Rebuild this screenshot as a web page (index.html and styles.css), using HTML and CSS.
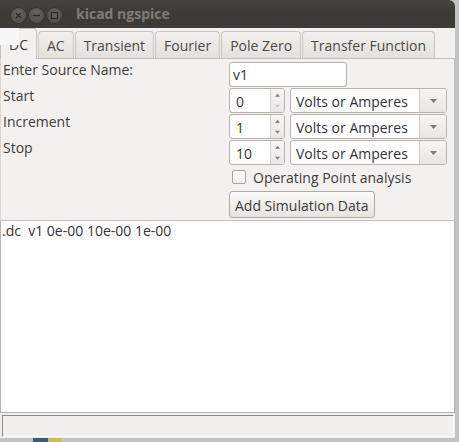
FILE: index.html
```html
<!DOCTYPE html>
<html>
<head>
<meta charset="utf-8">
<title>kicad ngspice</title>
<link rel="stylesheet" href="styles.css">
</head>
<body>
<div class="desktop">
  <div class="window">
    <div class="titlebar">
      <div class="wbtns">
        <span class="wbtn"><svg width="15" height="15" viewBox="0 0 15 15"><path d="M5 5 L10 10 M10 5 L5 10" stroke="#2b2a27" stroke-width="1.4" fill="none"/></svg></span>
        <span class="wbtn"><svg width="15" height="15" viewBox="0 0 15 15"><path d="M4 7.5 H11" stroke="#2b2a27" stroke-width="1.4" fill="none"/></svg></span>
        <span class="wbtn"><svg width="15" height="15" viewBox="0 0 15 15"><rect x="4.5" y="4.5" width="6" height="6" stroke="#2b2a27" stroke-width="1.2" fill="none"/></svg></span>
      </div>
      <span class="title">kicad ngspice</span>
    </div>

    <div class="tabs">
      <div class="tab active">DC</div>
      <div class="tab">AC</div>
      <div class="tab">Transient</div>
      <div class="tab">Fourier</div>
      <div class="tab">Pole Zero</div>
      <div class="tab">Transfer Function</div>
      <div class="glitch"></div>
    </div>

    <div class="panel">
      <div class="form">
        <div class="lbl">Enter Source Name:</div>
        <div class="cell"><div class="entry name">v1</div></div>

        <div class="lbl">Start</div>
        <div class="cell">
          <div class="spin">
            <span class="val">0</span>
            <span class="arrows">
              <svg width="13" height="12" viewBox="0 0 13 12"><path d="M4 8 L6.5 5 L9 8 Z" fill="#7a7a7a"/></svg>
              <svg width="13" height="12" viewBox="0 0 13 12"><path d="M4 4 L6.5 7 L9 4 Z" fill="#c4c4c4"/></svg>
            </span>
          </div>
          <div class="combo"><span class="ctext">Volts or Amperes</span><span class="cbtn"><svg width="9" height="6" viewBox="0 0 9 6"><path d="M1 1 L8 1 L4.5 5 Z" fill="#7b7b7b"/></svg></span></div>
        </div>

        <div class="lbl">Increment</div>
        <div class="cell">
          <div class="spin">
            <span class="val">1</span>
            <span class="arrows">
              <svg width="13" height="12" viewBox="0 0 13 12"><path d="M4 8 L6.5 5 L9 8 Z" fill="#7a7a7a"/></svg>
              <svg width="13" height="12" viewBox="0 0 13 12"><path d="M4 4 L6.5 7 L9 4 Z" fill="#7a7a7a"/></svg>
            </span>
          </div>
          <div class="combo"><span class="ctext">Volts or Amperes</span><span class="cbtn"><svg width="9" height="6" viewBox="0 0 9 6"><path d="M1 1 L8 1 L4.5 5 Z" fill="#7b7b7b"/></svg></span></div>
        </div>

        <div class="lbl">Stop</div>
        <div class="cell">
          <div class="spin">
            <span class="val">10</span>
            <span class="arrows">
              <svg width="13" height="12" viewBox="0 0 13 12"><path d="M4 8 L6.5 5 L9 8 Z" fill="#7a7a7a"/></svg>
              <svg width="13" height="12" viewBox="0 0 13 12"><path d="M4 4 L6.5 7 L9 4 Z" fill="#7a7a7a"/></svg>
            </span>
          </div>
          <div class="combo"><span class="ctext">Volts or Amperes</span><span class="cbtn"><svg width="9" height="6" viewBox="0 0 9 6"><path d="M1 1 L8 1 L4.5 5 Z" fill="#7b7b7b"/></svg></span></div>
        </div>

        <div class="spacer"></div>
        <div class="check"><span class="box"></span><span>Operating Point analysis</span></div>

        <div class="spacer"></div>
        <div class="btncell"><button class="btn">Add Simulation Data</button></div>
      </div>
    </div>

    <div class="output">.dc&nbsp; v1 0e-00 10e-00 1e-00</div>

    <div class="statusbar"><div class="status-inner"></div></div>
  </div>
  <div class="taskicon"></div>
</div>
</body>
</html>
```

FILE: styles.css
```css
* { box-sizing: border-box; }

html, body {
  margin: 0;
  padding: 0;
  background: #c3c3c3;
}

body {
  font-family: "Open Sans", "Noto Sans", sans-serif;
  font-size: 14px;
  color: #3c3c3c;
}

.desktop {
  position: relative;
  width: 459px;
  height: 442px;
  background: #c2c2c2;
  overflow: hidden;
}

.window {
  position: relative;
  width: 455px;
  height: 438px;
  background: #f2f1f0;
  border-radius: 0 6px 0 0;
  display: flex;
  flex-direction: column;
  overflow: hidden;
}

/* title bar */
.titlebar {
  height: 28px;
  flex: none;
  background: linear-gradient(#45443f, #3c3b37 40%, #3c3b37);
  display: flex;
  align-items: flex-start;
  padding-left: 11px;
}

.wbtns {
  display: flex;
  gap: 3px;
  padding-top: 8px;
}

.wbtn {
  width: 15px;
  height: 15px;
  border-radius: 50%;
  background: radial-gradient(circle at 50% 35%, #66655f, #52514c 70%);
  box-shadow: 0 0 0 0.5px #2e2d2a;
  display: block;
}

.wbtn svg { display: block; }

.title {
  margin-left: 14px;
  margin-top: 4px;
  line-height: 19px;
  font-weight: bold;
  font-size: 14px;
  color: #7f7c75;
}

/* tabs */
.tabs {
  position: relative;
  height: 30px;
  flex: none;
  display: flex;
  align-items: flex-end;
  z-index: 2;
}

.tab {
  height: 27px;
  padding: 4px 8px 0;
  line-height: 19px;
  border: 1px solid #c9c6c1;
  border-bottom: 0;
  border-radius: 4px 4px 0 0;
  background: linear-gradient(#f1f0ee, #e3e1de);
  color: #4a4a4a;
  margin-right: 1px;
  white-space: nowrap;
}

.tab.active {
  height: 31px;
  margin-bottom: -1px;
  padding-top: 6px;
  background: #f2f1f0;
  border-color: #c3c0bb;
  color: #3c3c3c;
}

.glitch {
  position: absolute;
  left: 0;
  top: 0;
  width: 19px;
  height: 17px;
  background: #f7f7f7;
}

/* panel */
.panel {
  flex: none;
  height: 163px;
  border: 1px solid #c4c1bc;
  border-left-color: #d9d7d3;
  padding: 3px 0 0 2px;
}

.form {
  display: grid;
  grid-template-columns: 226px 1fr;
  grid-template-rows: 25px 25px 25px 25px 18px 28px;
  row-gap: 1px;
}

.lbl {
  line-height: 15px;
  align-self: start;
  white-space: nowrap;
}

.cell {
  display: flex;
  align-items: stretch;
}

.entry {
  height: 25px;
  background: #fff;
  border: 1px solid #b7b4ae;
  border-radius: 3px;
  padding: 2px 0 0 3px;
  line-height: 19px;
  color: #333;
}

.entry.name { width: 118px; }

.spin {
  width: 56px;
  height: 25px;
  display: flex;
  border: 1px solid #b7b4ae;
  border-radius: 3px;
  background: #fff;
  overflow: hidden;
}

.spin .val {
  flex: 1;
  padding: 3px 0 0 6px;
  line-height: 19px;
  color: #333;
}

.spin .arrows {
  width: 14px;
  display: flex;
  flex-direction: column;
  border-left: 1px solid #d7d5d1;
  background: linear-gradient(#f7f6f5, #e9e8e6);
}

.spin .arrows svg { display: block; flex: 1; }

.combo {
  margin-left: 5px;
  width: 157px;
  height: 25px;
  display: flex;
  border: 1px solid #b7b4ae;
  border-radius: 3px;
  background: #fff;
  overflow: hidden;
}

.combo .ctext {
  flex: 1;
  padding: 3px 0 0 5px;
  line-height: 19px;
  color: #333;
  white-space: nowrap;
}

.combo .cbtn {
  width: 27px;
  border-left: 1px solid #cfccc7;
  background: linear-gradient(#f6f5f4, #e8e6e3);
  display: flex;
  align-items: center;
  justify-content: center;
}

.combo .cbtn svg { display: block; }

.check {
  margin-top: 4px;
  height: 14px;
  display: flex;
  align-items: center;
  gap: 7px;
  padding-left: 3px;
  line-height: 19px;
  white-space: nowrap;
}

.check .box {
  width: 14px;
  height: 14px;
  flex: none;
  border: 1px solid #a9a6a0;
  border-radius: 2px;
  background: linear-gradient(#ffffff, #eeeeec);
}

.btncell {
  padding-top: 6px;
}

.btn {
  display: block;
  height: 27px;
  font: inherit;
  color: #3c3c3c;
  line-height: 19px;
  padding: 1px 5px 0;
  border: 1px solid #b0ada7;
  border-radius: 3px;
  background: linear-gradient(#fafaf9, #e6e4e1);
  white-space: nowrap;
}

/* output */
.output {
  flex: 1;
  background: #fff;
  border: 1px solid #b4b2ae;
  border-top: 0;
  padding: 0 1px;
  line-height: 19px;
  color: #333;
  white-space: pre;
}

/* status */
.statusbar {
  flex: none;
  height: 25px;
  padding: 2px 1px 1px 2px;
  background: #f0efee;
}

.status-inner {
  height: 22px;
  border: 1px solid #fbfbfa;
  border-top-color: #8f8d88;
  border-left-color: #8f8d88;
  background: #f1f0ee;
}

.taskicon {
  position: absolute;
  left: 33px;
  top: 438px;
  width: 28px;
  height: 4px;
  background: linear-gradient(90deg, #2f5b92 0 55%, #e0b53a 55% 100%);
}
```
